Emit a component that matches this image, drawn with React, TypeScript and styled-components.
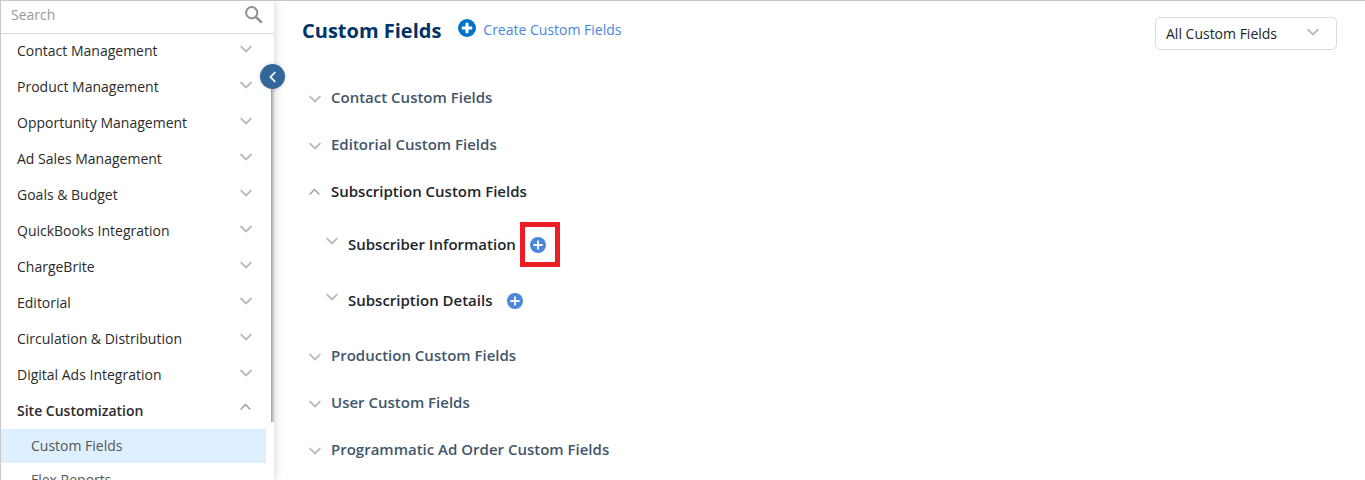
import React from 'react';
import styled, { createGlobalStyle } from 'styled-components';

const GlobalStyle = createGlobalStyle`
  * { box-sizing: border-box; }
  body {
    margin: 0;
    background: #fff;
    color: #212529;
    font-family: 'Open Sans', 'Noto Sans', sans-serif;
    font-size: 14px;
    line-height: 20px;
  }
  button, input, select { font: inherit; color: inherit; }
  ul { list-style: none; margin: 0; padding: 0; }
`;

const Page = styled.div`
  display: flex;
  height: 100vh;
  border-top: 1px solid #c8c8c8;
  border-left: 1px solid #c8c8c8;
  overflow: hidden;
`;

const Sidebar = styled.aside`
  position: relative;
  flex: 0 0 273px;
  box-shadow: 1px 0 8px rgba(0, 0, 0, 0.17);
`;

const SidebarScroll = styled.nav`
  height: 100%;
  overflow: hidden;
`;

const SearchBar = styled.label`
  display: flex;
  align-items: center;
  height: 33px;
  padding: 0 11px 4px 10px;
  border-bottom: 1px solid #dcdcdc;
`;

const SearchInput = styled.input`
  flex: 1;
  min-width: 0;
  padding: 0;
  border: 0;
  outline: 0;
  background: none;
  &::placeholder { color: #999; opacity: 1; }
`;

const MenuList = styled.ul`
  && { margin-top: -1px; }
`;

const MenuButton = styled.button<{ $open?: boolean }>`
  display: flex;
  align-items: center;
  justify-content: space-between;
  width: 100%;
  height: 36px;
  padding: 0 22px 0 16px;
  border: 0;
  background: none;
  color: #2b2b2b;
  font-weight: ${(p) => (p.$open ? 600 : 400)};
  text-align: left;
  svg { margin-bottom: ${(p) => (p.$open ? 8 : 4)}px; }
`;

const SubLink = styled.a<{ $active?: boolean }>`
  display: block;
  margin-right: 8px;
  padding: 7px 30px;
  background: ${(p) => (p.$active ? '#def0ff' : 'transparent')};
  color: #555;
  text-decoration: none;
`;

const ScrollThumb = styled.div`
  position: absolute;
  top: 76px;
  right: 0;
  width: 3px;
  height: 345px;
  border-left: 1px solid #a8a8a8;
  background: #c4c4c4;
`;

const CollapseButton = styled.button`
  position: absolute;
  top: 63px;
  right: -11px;
  display: grid;
  place-items: center;
  width: 25px;
  height: 25px;
  padding: 0;
  border: 0;
  border-radius: 50%;
  background: #336699;
  box-shadow: 0 0 4px rgba(0, 0, 0, 0.15);
`;

const Main = styled.main`
  flex: 1;
  min-width: 0;
  padding: 16px 28px 0;
`;

const Header = styled.header`
  display: flex;
  align-items: flex-start;
  margin-bottom: 23px;
`;

const Title = styled.h1`
  margin: 0 17px 0 0;
  color: #003366;
  font-size: 20px;
  font-weight: 700;
  line-height: 28px;
`;

const CreateLink = styled.a`
  display: flex;
  gap: 7px;
  padding-top: 3px;
  color: #4a86e0;
  text-decoration: none;
  svg { margin-top: -1px; }
`;

const SelectBox = styled.div`
  position: relative;
  width: 182px;
  margin-left: auto;
  svg { position: absolute; top: 11px; right: 18px; pointer-events: none; }
`;

const Select = styled.select`
  appearance: none;
  display: block;
  width: 100%;
  height: 33px;
  padding: 0 32px 0 10px;
  border: 1px solid #dcdcdc;
  border-radius: 5px;
  background: #fff;
`;

const SectionButton = styled.button<{ $open?: boolean }>`
  display: flex;
  align-items: center;
  gap: 10px;
  height: 47px;
  padding: 0 0 0 7px;
  border: 0;
  background: none;
  color: ${(p) => (p.$open ? '#212529' : '#42566a')};
  font-size: 15px;
  font-weight: 600;
  svg { margin-top: ${(p) => (p.$open ? 2 : 5)}px; }
`;

const SubList = styled.ul`
  && { padding: 2px 0 3px 24px; }
`;

const SubRow = styled.li`
  display: flex;
  align-items: center;
  height: 56px;
`;

const SubToggle = styled.button`
  display: flex;
  align-items: center;
  gap: 10px;
  padding: 0;
  border: 0;
  background: none;
  font-size: 15px;
  font-weight: 600;
  svg { margin-bottom: 6px; }
`;

const AddButton = styled.button<{ $marked?: boolean }>`
  position: relative;
  display: grid;
  place-items: center;
  width: 36px;
  height: 45px;
  margin-left: 4px;
  padding: 1px 0 0;
  border: 0;
  background: none;
  &::after {
    content: '';
    display: ${(p) => (p.$marked ? 'block' : 'none')};
    position: absolute;
    inset: 0 -4px 0 0;
    border: 5px solid #ee1c25;
  }
`;

const Chevron = ({ up = false }: { up?: boolean }) => (
  <svg width="12" height="8" viewBox="0 0 12 8" fill="none" stroke={up ? '#a0a0a0' : '#b8b8b8'} strokeWidth={up ? 1.5 : 1.8} aria-hidden="true">
    <path d={up ? 'M.6 6.5 5.5 1.5 10.4 6.5' : 'M.6 1.2 6 6.5 11.4 1.2'} />
  </svg>
);

const PlusDisc = ({ size, color, stroke }: { size: number; color: string; stroke: number }) => (
  <svg width={size} height={size} viewBox="0 0 18 18" aria-hidden="true">
    <circle cx="9" cy="9" r="9" fill={color} />
    <path d="M9 3.8v10.4M3.8 9h10.4" stroke="#fff" strokeWidth={stroke} />
  </svg>
);

const menu = [
  'Contact Management',
  'Product Management',
  'Opportunity Management',
  'Ad Sales Management',
  'Goals & Budget',
  'QuickBooks Integration',
  'ChargeBrite',
  'Editorial',
  'Circulation & Distribution',
  'Digital Ads Integration',
];

const sections: { name: string; groups?: string[] }[] = [
  { name: 'Contact Custom Fields' },
  { name: 'Editorial Custom Fields' },
  { name: 'Subscription Custom Fields', groups: ['Subscriber Information', 'Subscription Details'] },
  { name: 'Production Custom Fields' },
  { name: 'User Custom Fields' },
  { name: 'Programmatic Ad Order Custom Fields' },
];

export default function App() {
  return (
    <>
      <GlobalStyle />
      <Page>
        <Sidebar>
          <SidebarScroll>
            <SearchBar>
              <SearchInput type="text" placeholder="Search" aria-label="Search" />
              <svg width="18" height="18" viewBox="0 0 18 18" fill="none" stroke="#909090" aria-hidden="true">
                <circle cx="6.7" cy="6.7" r="5.6" strokeWidth="2" />
                <path d="M10.8 10.8 16.7 16.7" strokeWidth="2.4" />
              </svg>
            </SearchBar>
            <MenuList>
              {menu.map((name) => (
                <li key={name}>
                  <MenuButton>{name}<Chevron /></MenuButton>
                </li>
              ))}
              <li>
                <MenuButton $open aria-expanded="true">Site Customization<Chevron up /></MenuButton>
                <SubLink href="#custom-fields" $active>Custom Fields</SubLink>
                <SubLink href="#flex-reports">Flex Reports</SubLink>
              </li>
            </MenuList>
          </SidebarScroll>
          <ScrollThumb />
          <CollapseButton aria-label="Collapse menu">
            <svg width="8" height="12" viewBox="0 0 8 12" fill="none" stroke="#fff" strokeWidth="1.8" aria-hidden="true">
              <path d="M6.3 1 1.5 6l4.8 5" />
            </svg>
          </CollapseButton>
        </Sidebar>
        <Main>
          <Header>
            <Title>Custom Fields</Title>
            <CreateLink href="#create">
              <PlusDisc size={18} color="#0073c8" stroke={3} />
              Create Custom Fields
            </CreateLink>
            <SelectBox>
              <Select aria-label="Show fields">
                <option>All Custom Fields</option>
              </Select>
              <Chevron />
            </SelectBox>
          </Header>
          {sections.map(({ name, groups }) => (
            <section key={name}>
              <SectionButton $open={!!groups} aria-expanded={!!groups}>
                <Chevron up={!!groups} />
                {name}
              </SectionButton>
              {groups && (
                <SubList>
                  {groups.map((group, i) => (
                    <SubRow key={group}>
                      <SubToggle><Chevron />{group}</SubToggle>
                      <AddButton $marked={i === 0} aria-label={`Add to ${group}`}>
                        <PlusDisc size={16} color="#4a86dc" stroke={2} />
                      </AddButton>
                    </SubRow>
                  ))}
                </SubList>
              )}
            </section>
          ))}
        </Main>
      </Page>
    </>
  );
}
